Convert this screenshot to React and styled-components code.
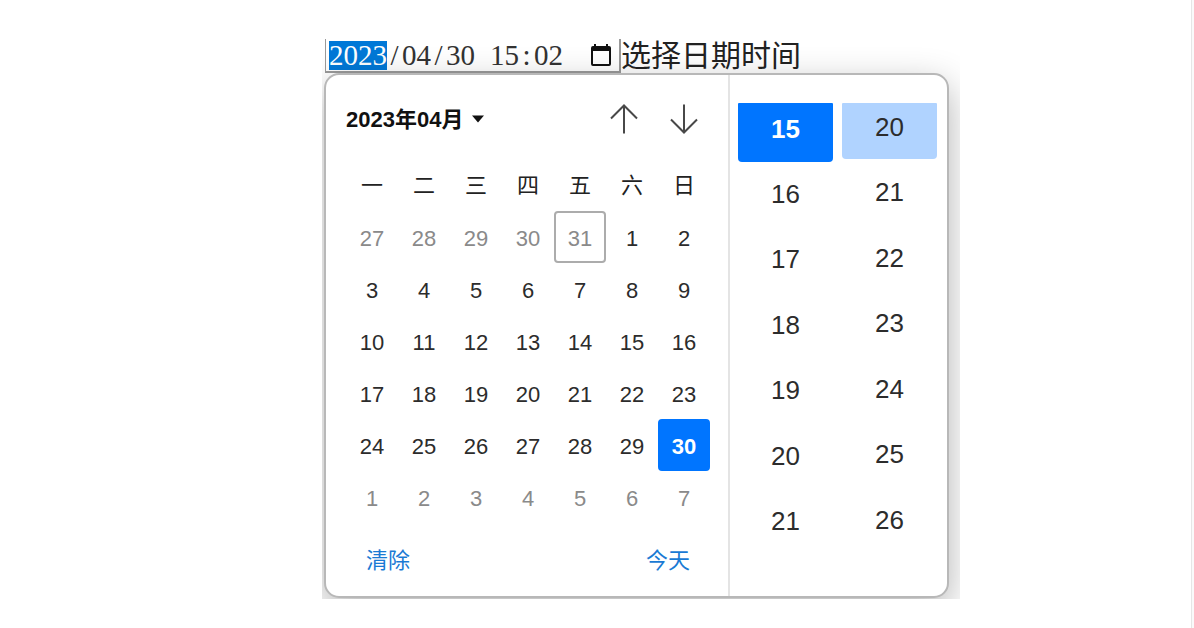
import { useState } from 'react';
import styled, { createGlobalStyle } from 'styled-components';

const WEEKDAYS = ['一', '二', '三', '四', '五', '六', '日'];

const WEEKS = [
    [27, 28, 29, 30, 31, 1, 2],
    [3, 4, 5, 6, 7, 8, 9],
    [10, 11, 12, 13, 14, 15, 16],
    [17, 18, 19, 20, 21, 22, 23],
    [24, 25, 26, 27, 28, 29, 30],
    [1, 2, 3, 4, 5, 6, 7],
];

const HOURS = [15, 16, 17, 18, 19, 20, 21];
const MINUTES = [20, 21, 22, 23, 24, 25, 26];

// the first and last week spill over into the neighbouring months
const isOutside = (week, day) => (week === 0 && day > 20) || week === 5;

export default function App() {
    const [picked, setPicked] = useState('4-6');
    const [hour, setHour] = useState(15);
    const [minute, setMinute] = useState(20);

    return (
        <Page>
            <GlobalStyle />
            <Picker>
                <FieldRow>
                    <DateField role="group" aria-label="选择日期时间">
                        <Segment id="year" $digits={4} $selected defaultValue="2023" />
                        <Separator>/</Separator>
                        <Segment aria-label="月" $digits={2} defaultValue="04" />
                        <Separator>/</Separator>
                        <Segment aria-label="日" $digits={2} defaultValue="30" />
                        <Separator />
                        <Segment aria-label="时" $digits={2} defaultValue="15" />
                        <Separator>:</Separator>
                        <Segment aria-label="分" $digits={2} defaultValue="02" />
                        <OpenButton type="button" aria-label="打开日历">
                            <svg width="20" height="22" viewBox="0 0 20 22">
                                <path fill="#111" fillRule="evenodd" d="M3 0h2v2h10V0h2v2h1a2 2 0 0 1 2 2v16a2 2 0 0 1-2 2H2a2 2 0 0 1-2-2V4a2 2 0 0 1 2-2h1V0zM2 7v13h16V7H2z" />
                            </svg>
                        </OpenButton>
                    </DateField>
                    <FieldLabel htmlFor="year">选择日期时间</FieldLabel>
                </FieldRow>
                <Popup>
                    <Calendar>
                        <Header>
                            <MonthButton type="button">
                                <span>2023年04月</span>
                                <svg width="12" height="8" viewBox="0 0 12 8">
                                    <path fill="#111" d="M0 0.5h12L6 7.5z" />
                                </svg>
                            </MonthButton>
                            <Arrows>
                                <ArrowButton type="button" aria-label="上个月">
                                    <svg width="28" height="30" viewBox="0 0 28 30">
                                        <path d="M14 29.5V1.5M1 14.5l13-13 13 13" />
                                    </svg>
                                </ArrowButton>
                                <ArrowButton type="button" aria-label="下个月">
                                    <svg width="28" height="30" viewBox="0 0 28 30">
                                        <path d="M14 0.5v28M1 15.5l13 13 13-13" />
                                    </svg>
                                </ArrowButton>
                            </Arrows>
                        </Header>
                        <Days>
                            <thead>
                                <tr>
                                    {WEEKDAYS.map((name) => <Weekday key={name}>{name}</Weekday>)}
                                </tr>
                            </thead>
                            <tbody>
                                {WEEKS.map((week, i) => (
                                    <tr key={i}>
                                        {week.map((day, j) => (
                                            <td key={j}>
                                                <DayButton
                                                    type="button"
                                                    $outside={isOutside(i, day)}
                                                    $today={i === 0 && day === 31}
                                                    $picked={picked === `${i}-${j}`}
                                                    onClick={() => setPicked(`${i}-${j}`)}
                                                >
                                                    {day}
                                                </DayButton>
                                            </td>
                                        ))}
                                    </tr>
                                ))}
                            </tbody>
                        </Days>
                        <Footer>
                            <TextButton type="button">清除</TextButton>
                            <TextButton type="button">今天</TextButton>
                        </Footer>
                    </Calendar>
                    <Times>
                        <TimeColumn>
                            {HOURS.map((h) => (
                                <HourButton key={h} type="button" $picked={h === hour} onClick={() => setHour(h)}>{h}</HourButton>
                            ))}
                        </TimeColumn>
                        <TimeColumn>
                            {MINUTES.map((m) => (
                                <MinuteButton key={m} type="button" $picked={m === minute} onClick={() => setMinute(m)}>{m}</MinuteButton>
                            ))}
                        </TimeColumn>
                    </Times>
                </Popup>
            </Picker>
        </Page>
    )
}

const GlobalStyle = createGlobalStyle`
* {
    box-sizing: border-box;
}
body {
    margin: 0;
    background: #fafafa;
    font-family: "Liberation Sans", "Noto Sans CJK SC", sans-serif;
}
button, input {
    margin: 0;
    padding: 0;
    border: 0;
    background: none;
    font: inherit;
    color: inherit;
}
button {
    cursor: pointer;
}
svg {
    display: block;
}
`

const Page = styled.main`
min-height: 100vh;
margin-right: 2px;
padding: 39px 0 0 91px;
background: white;
border-right: 1px solid #e6e6e6;
`

const Picker = styled.section`
max-width: 638px;
margin: 0 auto;
padding-bottom: 1px;
overflow: hidden;
`

const FieldRow = styled.div`
display: flex;
height: 34px;
padding-left: 3px;
`

const DateField = styled.div`
display: flex;
align-items: center;
width: 296px;
padding: 0 8px 0 3px;
border: 2px solid #9a9a9a;
border-top: 0;
border-left-width: 1px;
font-family: "Liberation Serif", serif;
font-size: 29px;
color: #333;
`

const Segment = styled.input`
width: ${({ $digits }) => $digits === 4 ? '58px' : '29px'};
height: 29px;
line-height: 29px;
text-align: center;
background: ${({ $selected }) => $selected ? '#0078d7' : 'none'};
color: ${({ $selected }) => $selected ? 'white' : 'inherit'};
`

const Separator = styled.span`
width: 15px;
line-height: 29px;
text-align: center;
`

const OpenButton = styled.button`
margin-left: auto;
`

const FieldLabel = styled.label`
font-size: 30px;
line-height: 34px;
color: #222;
`

const Popup = styled.div`
position: relative;
display: flex;
margin: 0 11px 0 2px;
border: 2px solid #b8b8b8;
border-radius: 15px;
background: white;
box-shadow: 0 12px 36px rgba(0, 0, 0, 0.3);
`

const Calendar = styled.div`
flex: 1;
padding: 0 18px 0 20px;
`

const Header = styled.div`
display: flex;
justify-content: space-between;
align-items: center;
height: 84px;
padding: 4px 12px 0 0;
`

const MonthButton = styled.button`
display: flex;
align-items: center;
gap: 9px;
font-size: 22px;
font-weight: 700;
color: #111;

span {
    padding-bottom: 4px;
}
`

const Arrows = styled.div`
display: flex;
gap: 32px;
`

const ArrowButton = styled.button`
path {
    fill: none;
    stroke: #484848;
    stroke-width: 2;
}
`

const Days = styled.table`
width: 100%;
table-layout: fixed;
border-collapse: collapse;
font-size: 22px;

td {
    padding: 0;
}
`

const Weekday = styled.th`
height: 52px;
padding: 0 0 4px;
font-weight: 400;
color: #222;
`

const DayButton = styled.button`
display: block;
width: 100%;
height: 52px;
padding-top: 4px;
border: 2px solid ${({ $today }) => $today ? '#acacac' : 'transparent'};
border-radius: 4px;
color: ${({ $outside }) => $outside ? '#8a8a8a' : '#2c2c2c'};
${({ $picked }) => $picked && `
    border-color: #0075ff;
    background: #0075ff;
    color: white;
    font-weight: 700;
`}
`

const Footer = styled.div`
display: flex;
justify-content: space-between;
align-items: center;
height: 73px;
padding: 0 20px 4px;
`

const TextButton = styled.button`
font-size: 22px;
color: #1a7ad4;
`

const Times = styled.div`
display: flex;
gap: 9px;
padding: 28px 10px 35px 8px;
border-left: 2px solid #e4e4e4;
`

const TimeColumn = styled.div`
display: grid;
grid-template-rows: repeat(7, 1fr);
align-items: start;
width: 95px;
`

const TimeButton = styled.button`
border-radius: 1px 1px 4px 4px;
font-size: 26px;
line-height: 48px;
color: #2c2c2c;
`

const HourButton = styled(TimeButton)`
height: 59px;
padding-bottom: 8px;
${({ $picked }) => $picked && `
    background: #0075ff;
    color: white;
    font-weight: 700;
`}
`

const MinuteButton = styled(TimeButton)`
height: 56px;
padding-bottom: 10px;
${({ $picked }) => $picked && `
    background: #b0d3ff;
`}
`
